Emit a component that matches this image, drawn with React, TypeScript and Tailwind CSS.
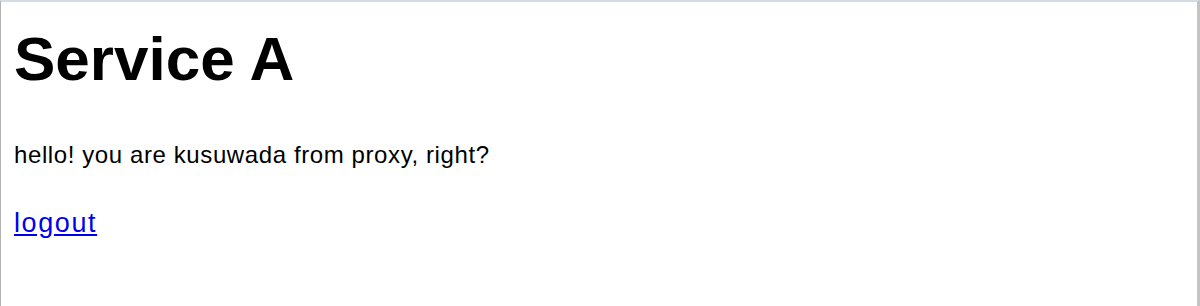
export default function App() {
    return (
        <div className="h-[306px] w-[1200px] bg-white border-t-2 border-t-[#d5dce5] border-l border-l-[#b3b3b3] border-r-[3px] border-r-[#c4c4c4] font-['Liberation_Sans',Arial,sans-serif] text-black overflow-hidden">
            <div className="flex flex-col items-start pl-[13px]">
                {/* Título */}
                <h1 className="mt-[17px] text-[62px] leading-[80px] font-bold">Service A</h1>

                <p className="mt-[40px] text-[24px] leading-[32px] tracking-[0.6px]">hello! you are kusuwada from proxy, right?</p>

                <a href="#" className="mt-[36px] text-[27px] leading-[32px] tracking-[1.6px] text-[#0000ee] underline">
                    logout
                </a>
            </div>
        </div>
    );
}
